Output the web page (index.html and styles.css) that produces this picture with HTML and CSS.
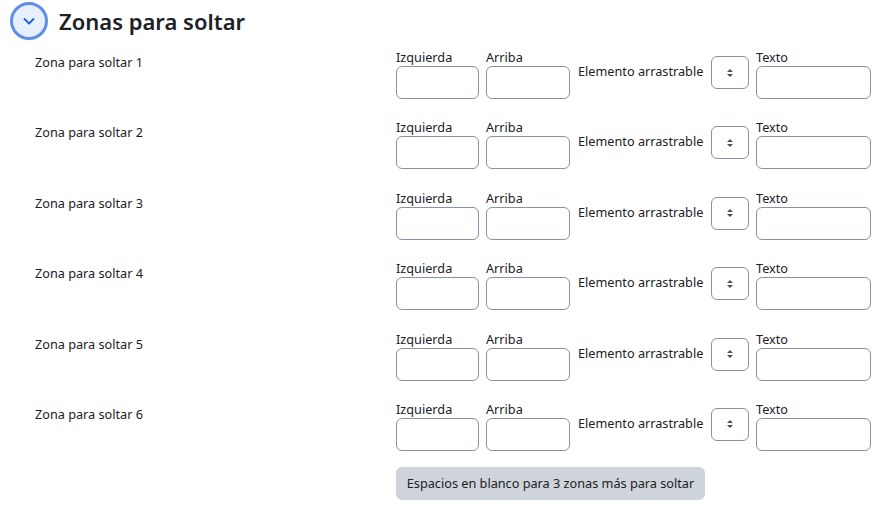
FILE: index.html
```html
<!DOCTYPE html>
<html lang="es">
<head>
<meta charset="utf-8">
<link rel="stylesheet" href="styles.css">
</head>
<body>
<div class="section">
  <div class="header">
    <span class="toggle">
      <svg width="14" height="14" viewBox="0 0 14 14"><path d="M2.5 5 L7 9.5 L11.5 5" fill="none" stroke="#1f5fd6" stroke-width="1.8" stroke-linecap="round" stroke-linejoin="round"/></svg>
    </span>
    <h3 class="title">Zonas para soltar</h3>
  </div>
  <div class="rows">
    <div class="row"><div class="rowlabel">Zona para soltar 1</div><div class="fields"><div class="field"><label>Izquierda</label><div class="input w-left"></div></div><div class="field"><label>Arriba</label><div class="input w-top"></div></div><div class="drag">Elemento arrastrable</div><div class="select"><svg width="8" height="10" viewBox="0 0 8 10"><path d="M1 4 L4 1 L7 4Z M1 6 L4 9 L7 6Z" fill="#495057"/></svg></div><div class="field"><label>Texto</label><div class="input w-text"></div></div></div></div>
    <div class="row"><div class="rowlabel">Zona para soltar 2</div><div class="fields"><div class="field"><label>Izquierda</label><div class="input w-left"></div></div><div class="field"><label>Arriba</label><div class="input w-top"></div></div><div class="drag">Elemento arrastrable</div><div class="select"><svg width="8" height="10" viewBox="0 0 8 10"><path d="M1 4 L4 1 L7 4Z M1 6 L4 9 L7 6Z" fill="#495057"/></svg></div><div class="field"><label>Texto</label><div class="input w-text"></div></div></div></div>
    <div class="row"><div class="rowlabel">Zona para soltar 3</div><div class="fields"><div class="field"><label>Izquierda</label><div class="input w-left"></div></div><div class="field"><label>Arriba</label><div class="input w-top"></div></div><div class="drag">Elemento arrastrable</div><div class="select"><svg width="8" height="10" viewBox="0 0 8 10"><path d="M1 4 L4 1 L7 4Z M1 6 L4 9 L7 6Z" fill="#495057"/></svg></div><div class="field"><label>Texto</label><div class="input w-text"></div></div></div></div>
    <div class="row"><div class="rowlabel">Zona para soltar 4</div><div class="fields"><div class="field"><label>Izquierda</label><div class="input w-left"></div></div><div class="field"><label>Arriba</label><div class="input w-top"></div></div><div class="drag">Elemento arrastrable</div><div class="select"><svg width="8" height="10" viewBox="0 0 8 10"><path d="M1 4 L4 1 L7 4Z M1 6 L4 9 L7 6Z" fill="#495057"/></svg></div><div class="field"><label>Texto</label><div class="input w-text"></div></div></div></div>
    <div class="row"><div class="rowlabel">Zona para soltar 5</div><div class="fields"><div class="field"><label>Izquierda</label><div class="input w-left"></div></div><div class="field"><label>Arriba</label><div class="input w-top"></div></div><div class="drag">Elemento arrastrable</div><div class="select"><svg width="8" height="10" viewBox="0 0 8 10"><path d="M1 4 L4 1 L7 4Z M1 6 L4 9 L7 6Z" fill="#495057"/></svg></div><div class="field"><label>Texto</label><div class="input w-text"></div></div></div></div>
    <div class="row"><div class="rowlabel">Zona para soltar 6</div><div class="fields"><div class="field"><label>Izquierda</label><div class="input w-left"></div></div><div class="field"><label>Arriba</label><div class="input w-top"></div></div><div class="drag">Elemento arrastrable</div><div class="select"><svg width="8" height="10" viewBox="0 0 8 10"><path d="M1 4 L4 1 L7 4Z M1 6 L4 9 L7 6Z" fill="#495057"/></svg></div><div class="field"><label>Texto</label><div class="input w-text"></div></div></div></div>
  </div>
  <div class="actions"><button class="btn">Espacios en blanco para 3 zonas más para soltar</button></div>
</div>
</body>
</html>
```
FILE: styles.css
```css
html, body {
  margin: 0;
  padding: 0;
  background: #fff;
}
body {
  font-family: "Noto Sans", "Open Sans", sans-serif;
  font-size: 12.7px;
  color: #1d2125;
}
.section {
  padding: 2px 0 0 10px;
}
.header {
  display: flex;
  align-items: center;
  height: 38px;
}
.toggle {
  box-sizing: border-box;
  width: 38px;
  height: 38px;
  border-radius: 50%;
  border: 3px solid #5d8fe9;
  background: #e7effc;
  display: flex;
  align-items: center;
  justify-content: center;
}
.title {
  margin: 0 0 0 11px;
  font-size: 22px;
  font-weight: 600;
  color: #1d2125;
  line-height: 30px;
}
.rows {
  margin-top: 8px;
  display: flex;
  flex-direction: column;
  gap: 20.4px;
}
.row {
  display: flex;
  height: 50px;
  padding-left: 25px;
}
.rowlabel {
  width: 361px;
  flex: none;
  line-height: 18px;
  padding-top: 5px;
  white-space: nowrap;
}
.fields {
  display: flex;
  align-items: flex-start;
  white-space: nowrap;
}
.field {
  display: flex;
  flex-direction: column;
}
.field label {
  line-height: 18px;
  height: 18px;
}
.input {
  box-sizing: border-box;
  height: 33px;
  border: 1px solid #8991a8;
  border-radius: 6px;
  background: #fff;
}
.w-left { width: 83px; margin-right: 7px; }
.w-top { width: 84px; }
.drag {
  flex: none;
  margin-left: 8px;
  line-height: 18px;
  padding-top: 14px;
  width: 133px;
}
.select {
  flex: none;
  box-sizing: border-box;
  width: 38px;
  height: 33px;
  margin-top: 8px;
  margin-right: 7px;
  border: 1px solid #8991a8;
  border-radius: 6px;
  display: flex;
  align-items: center;
  justify-content: center;
}
.w-text { width: 115px; }
.actions {
  padding-left: 386px;
  margin-top: 17px;
}
.btn {
  font-family: inherit;
  font-size: 12.7px;
  color: #1d2125;
  background: #ced4da;
  border: none;
  border-radius: 6px;
  height: 33px;
  width: 309px;
  padding: 0;
}
```
